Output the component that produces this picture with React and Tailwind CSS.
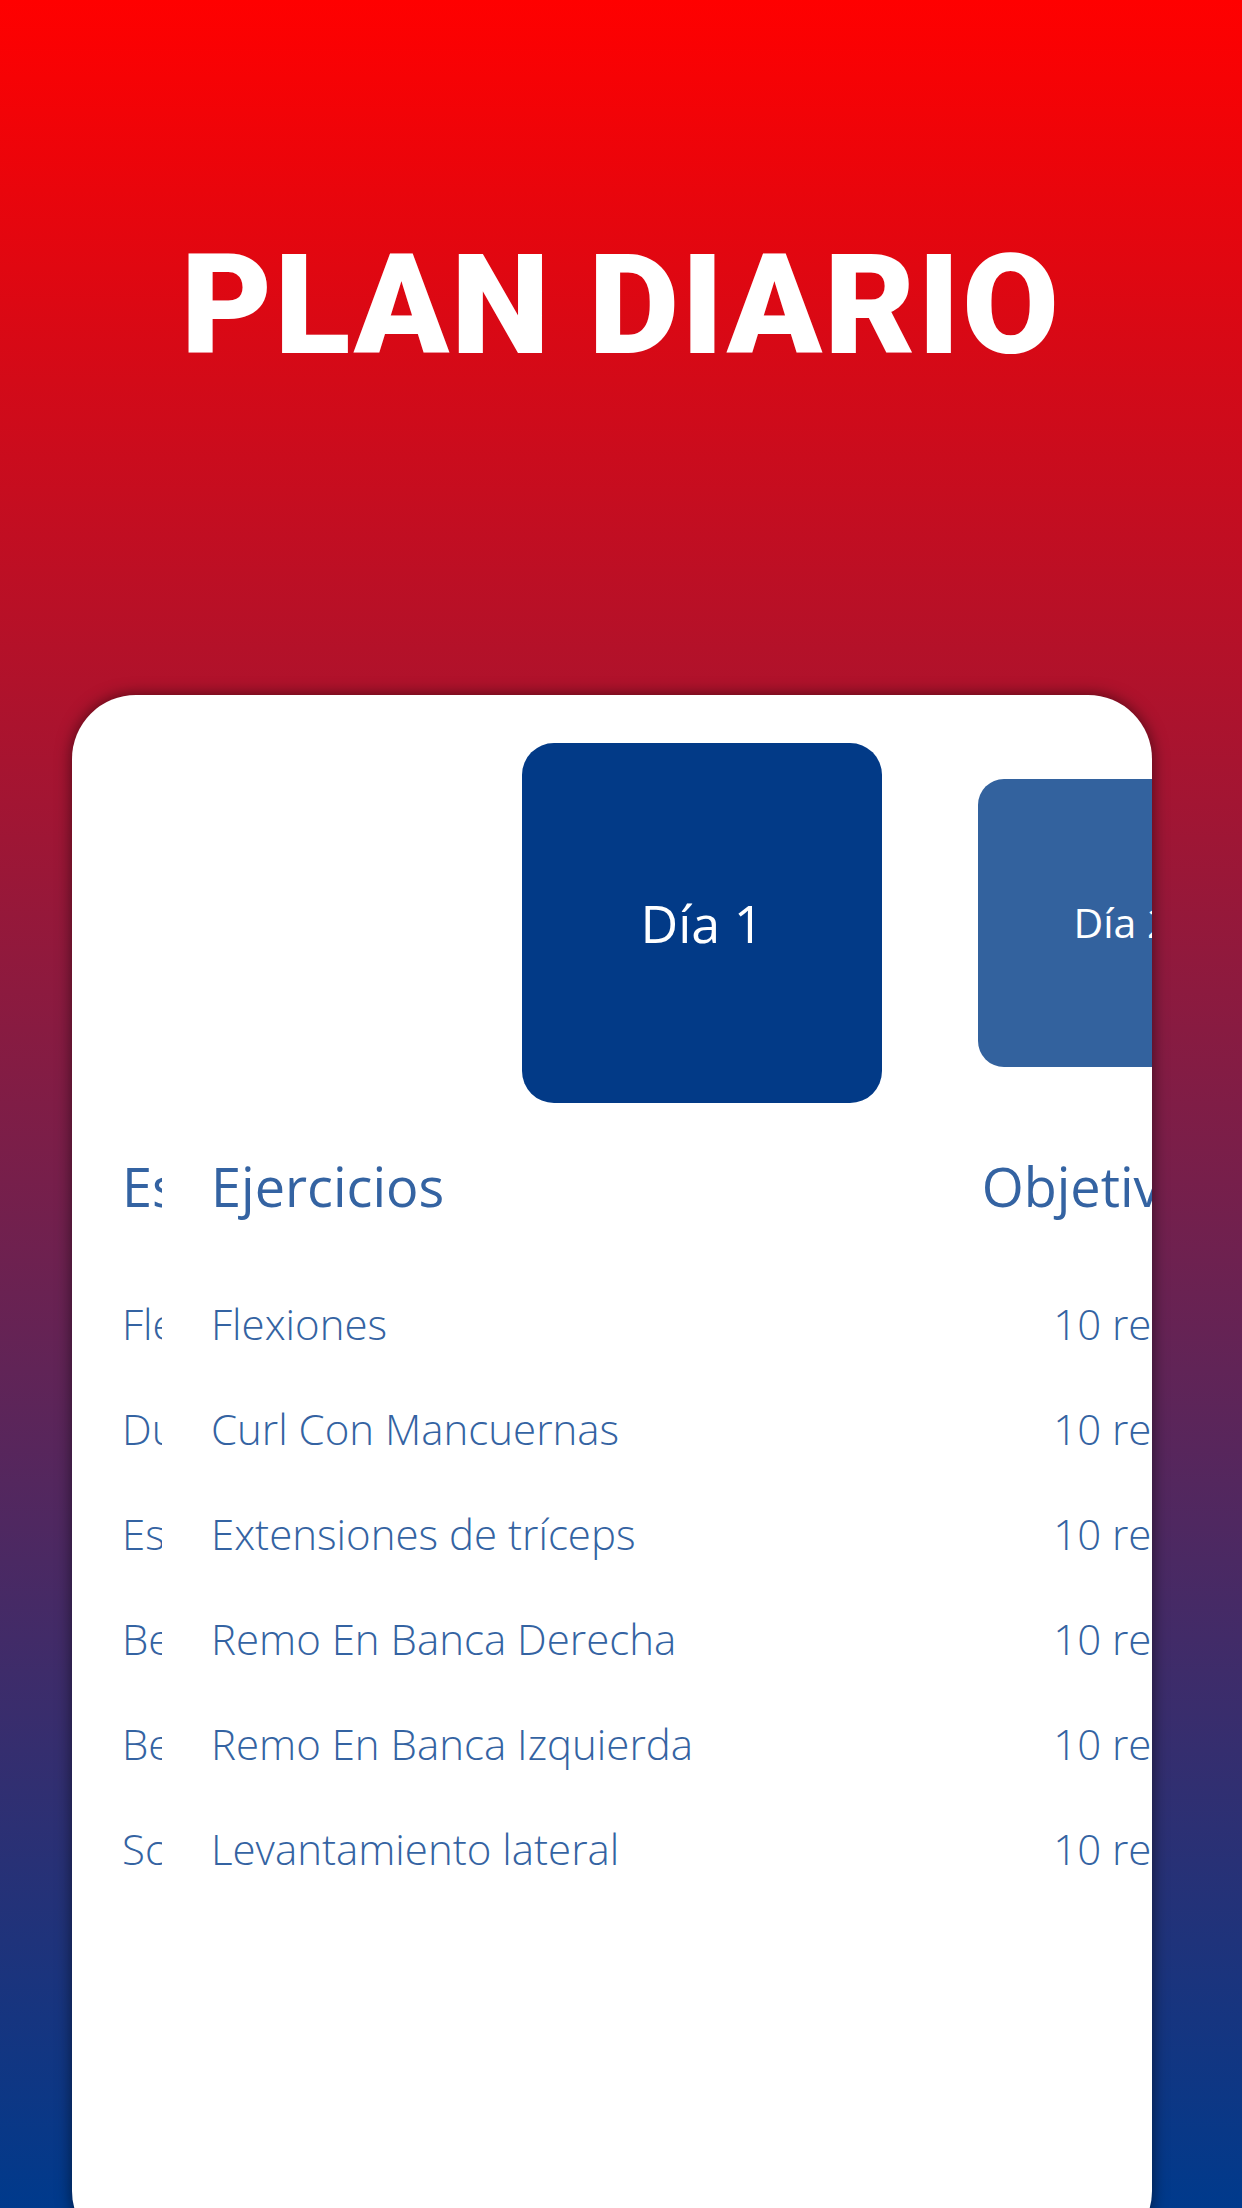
import React from "react";

const rows = [
  ["Flexiones", "Flexiones"],
  ["Dumbbell Curl", "Curl Con Mancuernas"],
  ["Estiramiento", "Extensiones de tríceps"],
  ["Bent Over Row Right", "Remo En Banca Derecha"],
  ["Bent Over Row Left", "Remo En Banca Izquierda"],
  ["Scaption", "Levantamiento lateral"],
];

export default function App() {
  return (
    <div
      className="w-[1242px] h-[2208px] overflow-hidden bg-[linear-gradient(to_bottom,#ff0000_0%,#003a8c_100%)] pt-[235px]"
      style={{ fontFamily: '"Open Sans", "Noto Sans", sans-serif' }}
    >
      <h1
        className="h-[140px] text-center text-[140px] leading-[140px] font-black text-white tracking-[0.015em]"
        style={{ fontFamily: 'Roboto, "Liberation Sans", sans-serif' }}
      >
        PLAN DIARIO
      </h1>

      <div className="ml-[72px] w-[1080px] mt-[320px] h-[1560px] rounded-[64px] bg-white overflow-hidden shadow-[0_0_16px_rgba(0,0,0,0.55)]">
        {/* carousel */}
        <div className="flex items-center pt-[48px] pl-[450px] gap-[96px] h-[408px]">
          <div className="w-[360px] h-[360px] shrink-0 rounded-[32px] bg-[#023a87] flex items-center justify-center">
            <span className="text-white text-[52px]">Día 1</span>
          </div>
          <div className="w-[288px] h-[288px] shrink-0 rounded-[26px] bg-[#33629e] flex items-center justify-center">
            <span className="text-white text-[41px]">Día 2</span>
          </div>
        </div>

        {/* table */}
        <div className="w-[1138px] mt-[45px] text-[#3463a2]">
          <div className="flex h-[76px] items-center pl-[50px] pr-[17px] text-[54px] leading-[76px] whitespace-nowrap">
            <div className="w-[40px] overflow-hidden shrink-0">Estado</div>
            <div className="ml-[49px]">Ejercicios</div>
            <div className="ml-auto text-right">Objetivo</div>
          </div>
          <div className="mt-[47px]">
            {rows.map(([a, b], i) => (
              <div
                key={i}
                className="flex h-[105px] items-center pl-[50px] pr-[14px] text-[42px] leading-[105px] font-light whitespace-nowrap"
              >
                <div className="w-[40px] overflow-hidden shrink-0">{a}</div>
                <div className="ml-[49px]">{b}</div>
                <div className="ml-auto text-right">10 reps</div>
              </div>
            ))}
          </div>
        </div>
      </div>
    </div>
  );
}
